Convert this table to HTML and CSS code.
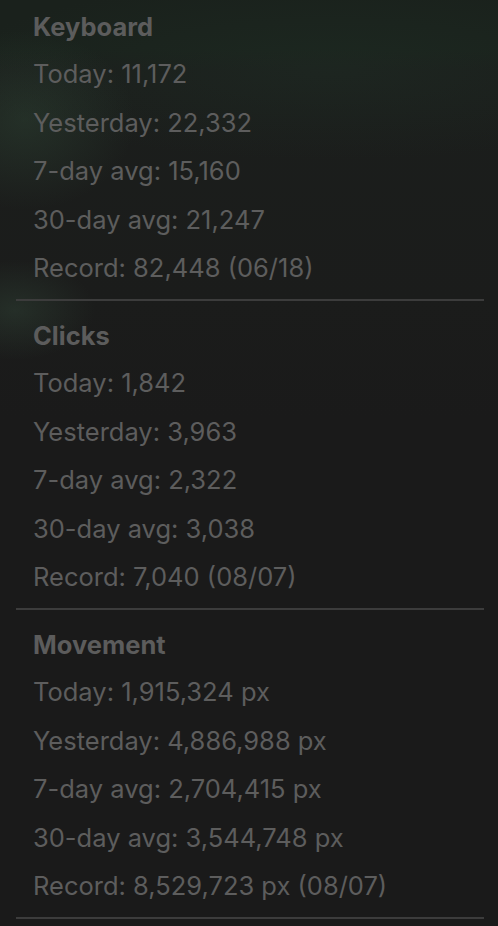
FILE: index.html
```html
<!DOCTYPE html>
<html lang="en">
<head>
    <meta charset="UTF-8">
    <meta name="viewport" content="width=device-width, initial-scale=1.0">
    <title>Input Stats</title>
    <link rel="stylesheet" href="styles.css">
</head>
<body>

    <div class="panel">
        <div class="section">
            <div class="title">Keyboard</div>
            <div class="row">Today: 11,172</div>
            <div class="row">Yesterday: 22,332</div>
            <div class="row">7-day avg: 15,160</div>
            <div class="row">30-day avg: 21,247</div>
            <div class="row">Record: 82,448 (06/18)</div>
        </div>
        <div class="separator"></div>
        <div class="section">
            <div class="title">Clicks</div>
            <div class="row">Today: 1,842</div>
            <div class="row">Yesterday: 3,963</div>
            <div class="row">7-day avg: 2,322</div>
            <div class="row">30-day avg: 3,038</div>
            <div class="row">Record: 7,040 (08/07)</div>
        </div>
        <div class="separator"></div>
        <div class="section">
            <div class="title">Movement</div>
            <div class="row">Today: 1,915,324 px</div>
            <div class="row">Yesterday: 4,886,988 px</div>
            <div class="row">7-day avg: 2,704,415 px</div>
            <div class="row">30-day avg: 3,544,748 px</div>
            <div class="row">Record: 8,529,723 px (08/07)</div>
        </div>
        <div class="separator"></div>
    </div>

</body>
</html>
```

FILE: styles.css
```css
html, body {
    height: 100%;
}
body {
    margin: 0;
    font-family: Inter, "Liberation Sans", sans-serif;
    background-color: #1a1a1a;
    background-image:
        radial-gradient(ellipse 80px 50px at 15px 310px, rgba(60, 90, 70, 0.3), transparent),
        radial-gradient(ellipse 110px 90px at 25px 120px, rgba(60, 95, 70, 0.28), transparent),
        radial-gradient(ellipse 380px 90px at 330px 70px, rgba(35, 60, 45, 0.25), transparent),
        linear-gradient(to bottom, #1a211c 0px, #1a211c 50px, #1b1e1c 70px, #1b1c1b 300px, #1a1a1a 420px);
    overflow: hidden;
}
.panel {
    display: flex;
    flex-direction: column;
}
.section {
    padding: 11px 0 6.5px 33px;
}
.section:first-child {
    padding-top: 3px;
}
.title {
    font-size: 25.5px;
    font-weight: bold;
    line-height: 47px;
    color: #5c5c5c;
}
.row {
    font-size: 25.5px;
    line-height: 48.5px;
    color: #5d5d5d;
}
.separator {
    height: 2px;
    margin: 0 14px 0 16px;
    background-color: #3c3c3c;
}
```
